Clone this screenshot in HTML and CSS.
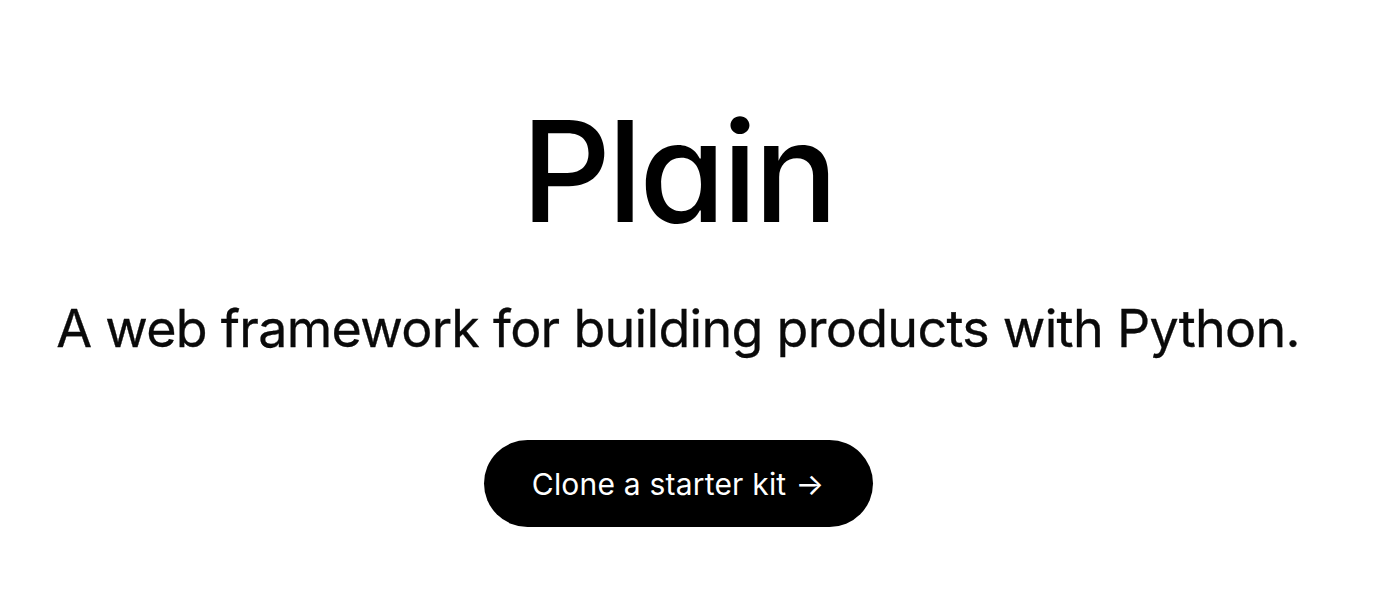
FILE: index.html
```html
<!DOCTYPE html>
<html>
<head>
<meta charset="utf-8">
<link rel="stylesheet" href="styles.css">
</head>
<body>
<main class="hero">
  <h1 class="title">Plain</h1>
  <p class="tagline">A web framework for building products with Python.</p>
  <a class="cta" href="#">Clone a starter kit <span class="arrow">→</span></a>
</main>
</body>
</html>
```
FILE: styles.css
```css
html, body {
  margin: 0;
  padding: 0;
  background: #ffffff;
}
.hero {
  display: flex;
  flex-direction: column;
  align-items: center;
  padding-right: 22px;
  font-family: Inter, "Liberation Sans", sans-serif;
  color: #000;
}
.title {
  margin: 91px 0 0 0;
  font-size: 140px;
  line-height: 160px;
  font-weight: 500;
  letter-spacing: -3.5px;
  font-feature-settings: "cv11" 1;
}
.tagline {
  margin: 46px 0 0 0;
  font-size: 52px;
  line-height: 64px;
  font-weight: 400;
  color: #0a0a0a;
  letter-spacing: -0.7px;
  -webkit-text-stroke: 0.3px #0a0a0a;
}
.cta {
  margin-top: 79px;
  display: flex;
  align-items: center;
  justify-content: center;
  width: 389px;
  height: 87px;
  box-sizing: border-box;
  background: #000;
  color: #fff;
  border-radius: 999px;
  text-decoration: none;
  font-size: 30px;
  font-weight: 400;
  letter-spacing: 0.2px;
  gap: 9px;
}
```
